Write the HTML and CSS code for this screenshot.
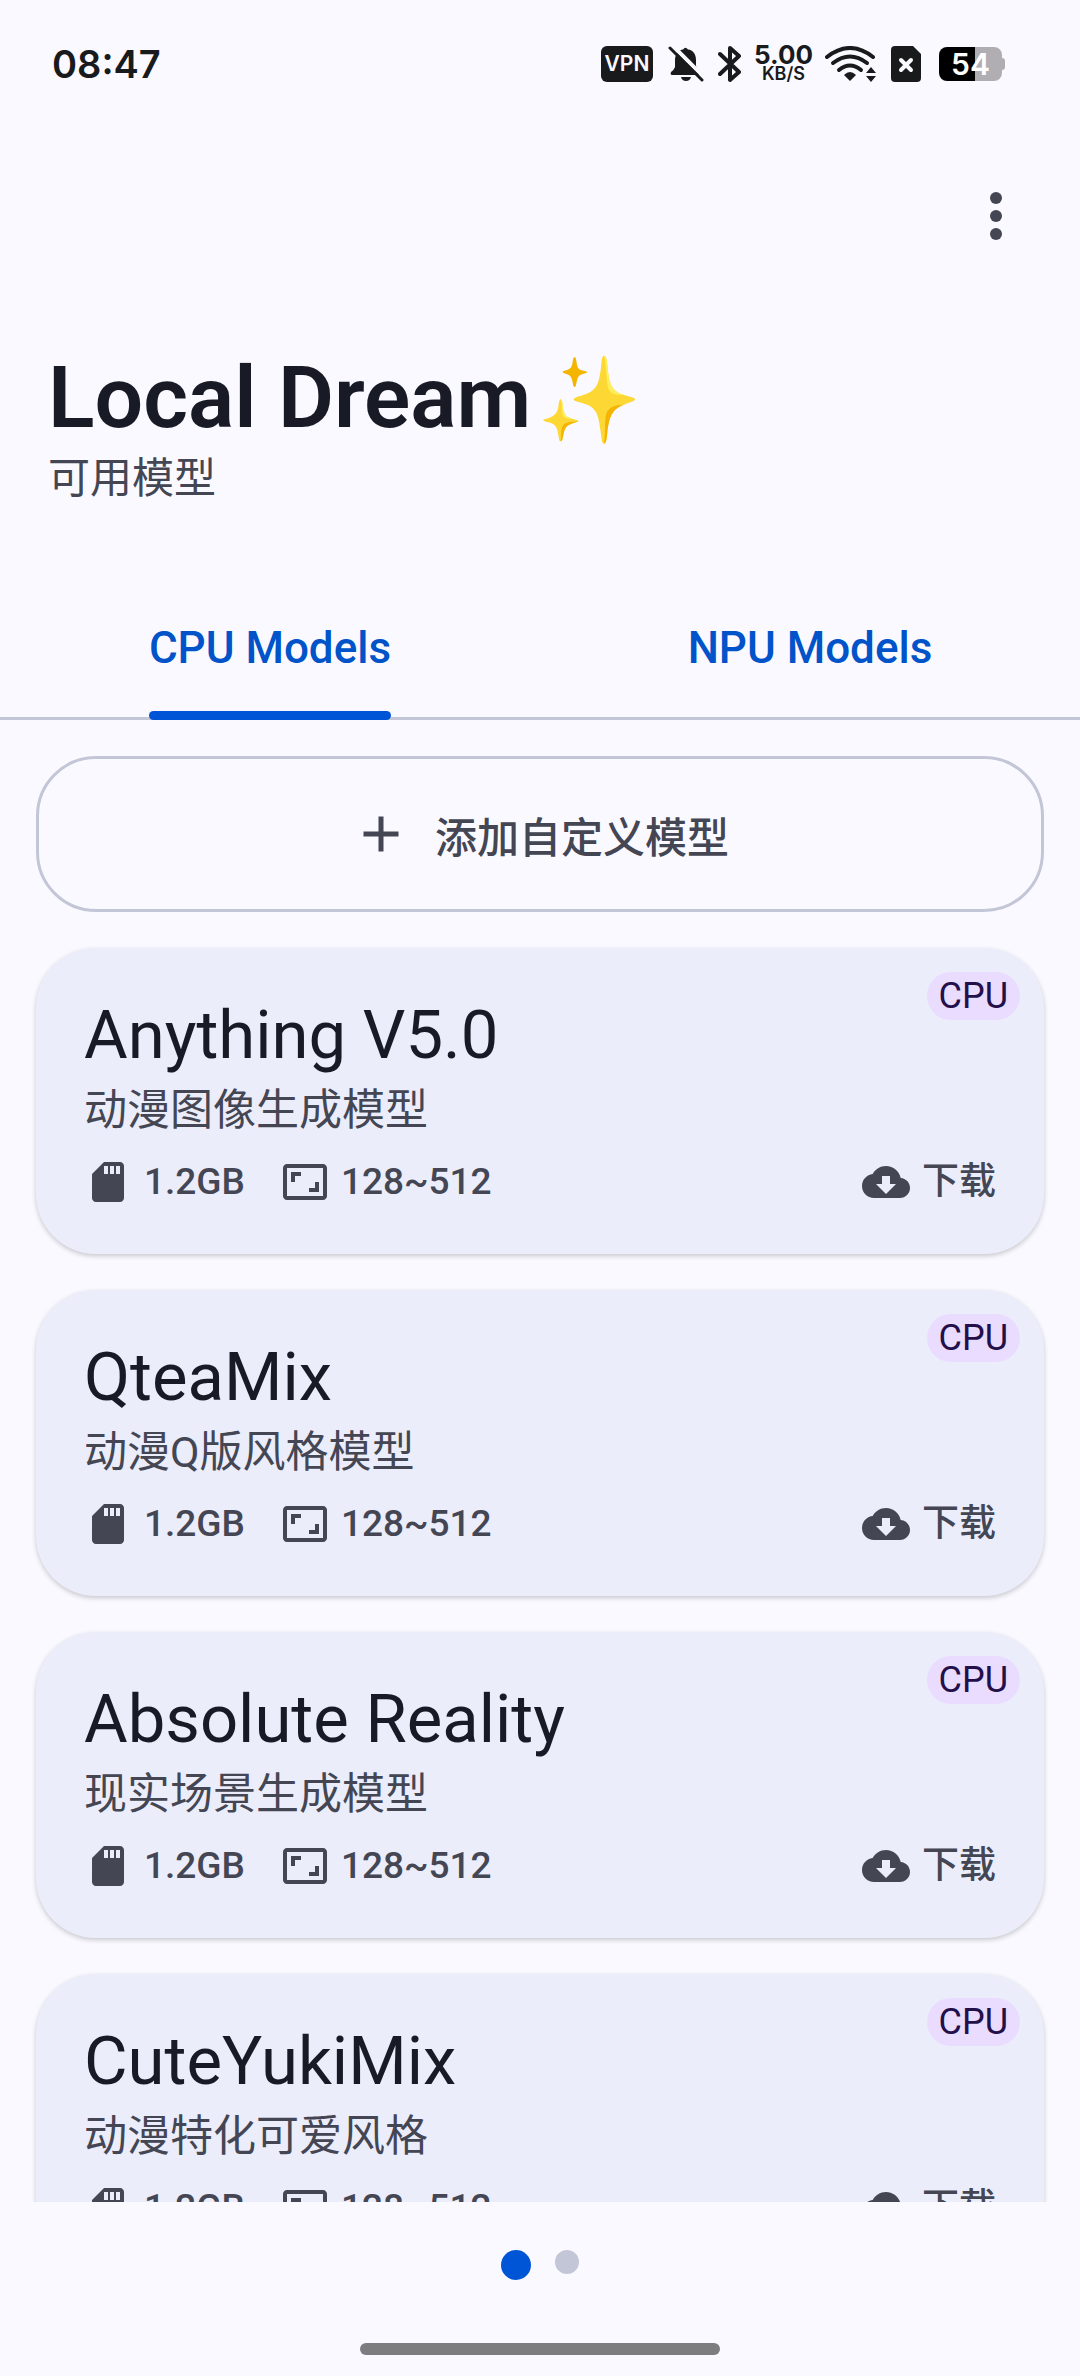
FILE: index.html
```html
<!DOCTYPE html>
<html lang="zh-CN">
<head>
    <meta charset="UTF-8">
    <meta name="viewport" content="width=device-width, initial-scale=1">
    <title>Local Dream</title>
    <link rel="stylesheet" href="styles.css">
</head>
<body>
    <!-- icons used more than once -->
    <svg class="sprite" aria-hidden="true">
        <symbol id="sd-card" viewBox="0 0 24 24">
            <path d="M18 2h-8L4.02 8 4 20c0 1.100.9 2 2 2h12c1.100 0 2-.9 2-2V4c0-1.100-.9-2-2-2zm-6 6h-2V4h2v4zm3 0h-2V4h2v4zm3 0h-2V4h2v4z"/>
        </symbol>
        <symbol id="aspect" viewBox="0 0 24 24">
            <path d="M19 12h-2v3h-3v2h5v-5zM7 9h3V7H5v5h2V9zm14-6H3c-1.100 0-2 .9-2 2v14c0 1.100.9 2 2 2h18c1.100 0 2-.9 2-2V5c0-1.100-.9-2-2-2zm0 16.010H3V4.990h18v14.020z"/>
        </symbol>
        <symbol id="cloud" viewBox="0 0 24 24">
            <path d="M19.350 10.040C18.670 6.590 15.640 4 12 4 9.110 4 6.600 5.640 5.350 8.040 2.340 8.360 0 10.910 0 14c0 3.310 2.690 6 6 6h13c2.760 0 5-2.240 5-5 0-2.640-2.050-4.780-4.650-4.960zM17 13l-5 5-5-5h3V9h4v4h3z"/>
        </symbol>
    </svg>

    <div class="status-bar">
        <span class="clock">08:47</span>
        <div class="status-icons">
            <span class="vpn">VPN</span>
            <svg class="bell" width="36" height="36" viewBox="0 0 36 36">
                <path d="M7 21V14C7 8 11 4 15 3.500Q17.500 0 20 3.500C25 4 28 8 28 14V20Q29 24 32 26Q34 29 31 29H4Q2 29 3 26Q6 24 7 21Z"/>
                <path d="M13 31H23Q22 35 18 35T13 31Z"/>
                <path class="cut" d="M4 -1L38 33"/>
                <path class="slash" d="M2 2L34 34"/>
            </svg>
            <svg class="bluetooth" width="24" height="38" viewBox="0 0 24 38">
                <path d="M2 9L21 27L12 35V3L21 11L2 29"/>
            </svg>
            <span class="net-speed"><b>5.00</b><small>KB/S</small></span>
            <svg class="wifi" width="52" height="36" viewBox="0 0 52 36">
                <path class="arc" d="M2 11Q25 -7 48 11"/>
                <path class="arc" d="M8 17Q25 4 42 17"/>
                <path class="arc" d="M14 24Q25 15 36 24"/>
                <path d="M19 29Q25 23 31 29L25 35Z"/>
                <path d="M41 27L46 21L51 27ZM41 30H51L46 36Z"/>
            </svg>
            <svg class="sim" width="30" height="36" viewBox="0 0 30 36">
                <path d="M4 0H22L30 8V32Q30 36 26 36H4Q0 36 0 32V4Q0 0 4 0Z"/>
                <path class="cross" d="M10 14L20 24M20 14L10 24"/>
            </svg>
            <span class="battery">54</span>
        </div>
    </div>

    <header class="top-bar">
        <button class="menu" aria-label="更多">
            <svg width="72" height="72" viewBox="0 0 24 24"><circle cx="12" cy="6" r="2"/><circle cx="12" cy="12" r="2"/><circle cx="12" cy="18" r="2"/></svg>
        </button>
    </header>

    <div class="heading">
        <h1>Local Dream<svg class="sparkles" width="101" height="92" viewBox="12 15 303 276" role="img" aria-label="✨">
            <path d="M219 26C226 26 228 40 230 62C234 112 243 133 279 144C303 151 312 152 312 157S303 164 279 173C243 186 235 208 229 256C227 278 225 290 219 290S212 277 209 254C203 205 197 181 160 170C136 163 128 162 128 157S138 150 163 142C200 129 205 104 210 60C212 40 213 26 219 26Z"/>
            <path class="light" d="M219 26C226 26 228 40 230 62C234 112 243 133 279 144C260 144 244 143 235 131C226 118 228 70 219 26Z"/>
            <path class="dark" d="M279 173C243 186 235 208 229 256C227 278 225 290 219 290C226 240 216 205 234 187C246 175 262 174 279 173Z"/>
            <path d="M89 157C94 157 94 169 96 182C99 204 106 210 125 216C138 219 142 220 142 222S138 225 125 229C106 236 101 243 97 264C94 276 94 283 89 283S84 275 82 263C78 238 72 231 53 226C40 223 37 221 37 219S42 217 54 213C72 206 79 197 82 180C84 166 85 157 89 157Z"/>
            <path class="light" d="M89 157C94 157 94 169 96 182C99 204 106 210 125 216C108 217 98 213 95 203C92 190 93 171 89 157Z"/>
            <path class="dark" d="M142 222Q138 225 125 229C106 236 101 243 97 264C94 276 94 283 89 283C92 260 88 245 97 234C106 223 125 226 142 222Z"/>
            <path class="dark" d="M131 30C135 30 136 42 138 53C140 66 148 69 159 71C166 73 168 74 168 76S165 79 158 80C145 83 141 88 138 100C135 113 135 120 131 120S126 112 124 101C121 88 116 83 104 80C97 78 95 77 95 75S98 72 105 70C116 67 121 63 124 51C126 39 127 30 131 30Z"/>
        </svg></h1>
        <p>可用模型</p>
    </div>

    <nav class="tabs">
        <a class="tab active" href="#cpu"><span>CPU Models</span></a>
        <a class="tab" href="#npu"><span>NPU Models</span></a>
    </nav>

    <main class="models">
        <button class="add-model">
            <svg width="60" height="60" viewBox="0 0 24 24"><path d="M19 13h-6v6h-2v-6H5v-2h6V5h2v6h6v2z"/></svg>
            添加自定义模型
        </button>

        <article class="card">
            <span class="badge">CPU</span>
            <h2>Anything V5.0</h2>
            <p>动漫图像生成模型</p>
            <div class="info">
                <span class="meta"><svg><use href="#sd-card"/></svg>1.2GB</span>
                <span class="meta"><svg><use href="#aspect"/></svg>128~512</span>
                <button class="meta download"><svg><use href="#cloud"/></svg>下载</button>
            </div>
        </article>

        <article class="card">
            <span class="badge">CPU</span>
            <h2>QteaMix</h2>
            <p>动漫Q版风格模型</p>
            <div class="info">
                <span class="meta"><svg><use href="#sd-card"/></svg>1.2GB</span>
                <span class="meta"><svg><use href="#aspect"/></svg>128~512</span>
                <button class="meta download"><svg><use href="#cloud"/></svg>下载</button>
            </div>
        </article>

        <article class="card">
            <span class="badge">CPU</span>
            <h2>Absolute Reality</h2>
            <p>现实场景生成模型</p>
            <div class="info">
                <span class="meta"><svg><use href="#sd-card"/></svg>1.2GB</span>
                <span class="meta"><svg><use href="#aspect"/></svg>128~512</span>
                <button class="meta download"><svg><use href="#cloud"/></svg>下载</button>
            </div>
        </article>

        <article class="card">
            <span class="badge">CPU</span>
            <h2>CuteYukiMix</h2>
            <p>动漫特化可爱风格</p>
            <div class="info">
                <span class="meta"><svg><use href="#sd-card"/></svg>1.2GB</span>
                <span class="meta"><svg><use href="#aspect"/></svg>128~512</span>
                <button class="meta download"><svg><use href="#cloud"/></svg>下载</button>
            </div>
        </article>
    </main>

    <footer class="bottom">
        <div class="dots">
            <span class="dot current"></span>
            <span class="dot"></span>
        </div>
        <div class="home-bar"></div>
    </footer>
</body>
</html>
```

FILE: styles.css
```css
* {
    box-sizing: border-box;
}
body {
    margin: 0;
    height: 100vh;
    display: flex;
    flex-direction: column;
    overflow: hidden;
    background-color: #faf9ff;
    color: #181b25;
    font-family: Roboto, "Noto Sans CJK SC", sans-serif;
}
h1, h2, p {
    margin: 0;
}
button {
    padding: 0;
    border: 0;
    background: none;
    color: inherit;
    font: inherit;
}
svg {
    fill: currentColor;
}
.sprite {
    display: none;
}

/* status bar */
.status-bar {
    height: 128px;
    flex-shrink: 0;
    display: flex;
    justify-content: space-between;
    align-items: center;
    padding: 0 78px 0 52px;
    color: #191a1c;
    font-family: Inter, sans-serif;
}
.clock {
    font-size: 38px;
    font-weight: 600;
}
.status-icons {
    display: flex;
    align-items: center;
}
.vpn {
    width: 52px;
    height: 36px;
    border-radius: 6px;
    background-color: #191a1c;
    color: #faf9ff;
    font-size: 21px;
    font-weight: 600;
    line-height: 36px;
    text-align: center;
}
.bell {
    margin-left: 15px;
}
.bell .cut {
    stroke: #faf9ff;
    stroke-width: 4;
}
.bell .slash {
    stroke: currentColor;
    stroke-width: 3;
    stroke-linecap: round;
}
.bluetooth {
    margin-left: 14px;
    fill: none;
    stroke: currentColor;
    stroke-width: 4;
    stroke-linecap: round;
    stroke-linejoin: round;
}
.net-speed {
    margin-left: 12px;
    display: flex;
    flex-direction: column;
    align-items: center;
}
.net-speed b {
    font-size: 26px;
    font-weight: 700;
    line-height: 20px;
}
.net-speed small {
    font-size: 18px;
    font-weight: 600;
    line-height: 18px;
}
.wifi {
    margin-left: 12px;
}
.wifi .arc {
    fill: none;
    stroke: currentColor;
    stroke-width: 4;
    stroke-linecap: round;
}
.sim {
    margin-left: 14px;
}
.sim .cross {
    stroke: #faf9ff;
    stroke-width: 4;
    stroke-linecap: round;
}
.battery {
    position: relative;
    margin-left: 18px;
    width: 63px;
    height: 34px;
    border-radius: 8px;
    background: linear-gradient(to right, #000 36px, #b0aeb3 36px);
    color: #fff;
    font-size: 30px;
    font-weight: 600;
    line-height: 34px;
    text-align: center;
}
.battery::after {
    content: "";
    position: absolute;
    left: 63px;
    top: 11px;
    width: 3px;
    height: 12px;
    border-radius: 0 3px 3px 0;
    background-color: #b0aeb3;
}

/* header */
.top-bar {
    display: flex;
    justify-content: flex-end;
    padding: 52px 48px 0;
    color: #444654;
}
.menu, .menu svg {
    display: block;
}
.heading {
    padding: 96px 48px 0;
    height: 324px;
    flex-shrink: 0;
}
.heading h1 {
    display: flex;
    align-items: center;
    font-size: 86px;
    font-weight: 600;
    line-height: 100px;
}
.heading p {
    color: #444654;
    font-size: 42px;
    line-height: 62px;
}
.sparkles {
    margin-left: 4px;
    fill: #fdd835;
}
.sparkles .light {
    fill: #ffee58;
}
.sparkles .dark {
    fill: #f4b400;
}

/* tabs */
.tabs {
    display: flex;
    flex-shrink: 0;
    border-bottom: 3px solid #c3c6d6;
}
.tab {
    flex: 1;
    height: 141px;
    display: flex;
    justify-content: center;
    color: #0053c9;
    font-size: 44px;
    font-weight: 500;
    line-height: 144px;
    text-decoration: none;
}
.tab span {
    position: relative;
}
.active span::after {
    content: "";
    position: absolute;
    left: 0;
    right: 0;
    bottom: -3px;
    height: 9px;
    border-radius: 5px;
    background-color: #0054d6;
}

/* model list */
.models {
    flex: 1;
    min-height: 0;
    display: flex;
    flex-direction: column;
    gap: 36px;
    padding: 36px 36px 0;
    overflow: hidden;
}
.add-model {
    flex-shrink: 0;
    display: flex;
    justify-content: center;
    align-items: center;
    gap: 24px;
    height: 156px;
    border: 3px solid #c3c6d6;
    border-radius: 60px;
    color: #444654;
    font-size: 42px;
    font-weight: 500;
}
.card {
    position: relative;
    flex-shrink: 0;
    height: 306px;
    padding: 48px;
    border-radius: 60px;
    background-color: #ebedfa;
    box-shadow: 0 2px 5px rgba(0, 0, 0, 0.2);
}
.card h2 {
    font-size: 67px;
    font-weight: 400;
    line-height: 78px;
}
.card p {
    color: #444654;
    font-size: 43px;
    line-height: 72px;
}
.badge {
    position: absolute;
    top: 24px;
    right: 24px;
    padding: 0 12px;
    border-radius: 24px;
    background-color: #eadcff;
    color: #23104a;
    font-size: 36px;
    line-height: 48px;
}
.info {
    display: flex;
    gap: 36px;
    margin-top: 12px;
}
.meta {
    display: flex;
    align-items: center;
    gap: 12px;
    color: #444654;
    font-size: 37px;
    font-weight: 500;
    line-height: 48px;
}
.meta svg {
    width: 48px;
    height: 48px;
}
.download {
    margin-left: auto;
}

/* bottom */
.bottom {
    flex-shrink: 0;
    display: flex;
    flex-direction: column;
    align-items: center;
    justify-content: space-between;
    height: 174px;
    padding: 48px 0 21px;
}
.dots {
    display: flex;
    gap: 24px;
}
.dot {
    width: 24px;
    height: 24px;
    border-radius: 50%;
    background-color: #c3c6d6;
}
.current {
    width: 30px;
    height: 30px;
    background-color: #0054d6;
}
.home-bar {
    width: 33.333%;
    height: 12px;
    border-radius: 6px;
    background-color: #7d7d7f;
}
```
